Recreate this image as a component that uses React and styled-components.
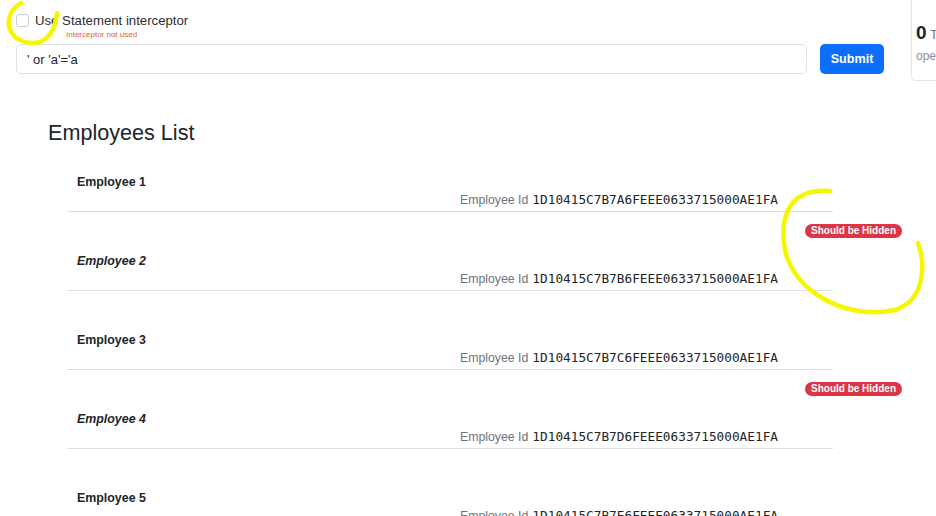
import React from "react";
import styled, { createGlobalStyle } from "styled-components";

const employees = [
  { name: "Employee 1", id: "1D10415C7B7A6FEEE0633715000AE1FA", hidden: false },
  { name: "Employee 2", id: "1D10415C7B7B6FEEE0633715000AE1FA", hidden: true },
  { name: "Employee 3", id: "1D10415C7B7C6FEEE0633715000AE1FA", hidden: false },
  { name: "Employee 4", id: "1D10415C7B7D6FEEE0633715000AE1FA", hidden: true },
  { name: "Employee 5", id: "1D10415C7B7E6FEEE0633715000AE1FA", hidden: false },
];

const App = () => {
  return (
    <Page>
      <GlobalStyle />
      <Top>
        <Form>
          <CheckRow>
            <Check type="checkbox" />
            <CheckLabel>Use Statement interceptor</CheckLabel>
          </CheckRow>
          <Hint>Interceptor not used</Hint>
          <InputRow>
            <QueryInput defaultValue="' or 'a'='a" />
            <SubmitButton>Submit</SubmitButton>
          </InputRow>
        </Form>
        <StatCard>
          <StatTop>Tot</StatTop>
          <StatValue>
            <strong>0</strong> Total
          </StatValue>
          <StatSub>operations</StatSub>
        </StatCard>
      </Top>

      <Section>
        <Title>Employees List</Title>
        <List>
          {employees.map((emp, index) => (
            <Row key={index}>
              <BadgeSlot>{emp.hidden && <Badge>Should be Hidden</Badge>}</BadgeSlot>
              <Name italic={emp.hidden}>{emp.name}</Name>
              <IdLine>
                <IdLabel>Employee Id</IdLabel>
                <IdValue>{emp.id}</IdValue>
              </IdLine>
            </Row>
          ))}
        </List>
      </Section>

      <Marks width="936" height="516" viewBox="0 0 936 516">
        <path d="M21 3 C6 11, 3 33, 22 41 C42 48, 55 36, 57 13" />
        <path d="M830 191 C790 188, 779 215, 785 250 C795 295, 850 320, 895 310 C925 300, 926 265, 918 243" />
      </Marks>
    </Page>
  );
};

const GlobalStyle = createGlobalStyle`
  body {
    margin: 0;
    background: #fff;
    font-family: "Liberation Sans", Arial, sans-serif;
    color: #212529;
    overflow: hidden;
  }
`;

const Page = styled.div`
  position: relative;
  width: 936px;
  height: 516px;
  overflow: hidden;
`;

const Top = styled.div`
  display: flex;
  align-items: flex-start;
`;

const Form = styled.div`
  flex-shrink: 0;
  width: 868px;
  padding: 13px 0 0 16px;
  display: flex;
  flex-direction: column;
`;

const CheckRow = styled.label`
  display: flex;
  align-items: center;
  height: 14px;
`;

const Check = styled.input`
  appearance: none;
  width: 13px;
  height: 13px;
  margin: 0;
  border: 1px solid #c9cdd1;
  border-radius: 3px;
  background: #fff;
`;

const CheckLabel = styled.span`
  margin-left: 6px;
  font-size: 13.2px;
  line-height: 15px;
  color: #2b2f33;
`;

const Hint = styled.div`
  margin: 3px 0 0 50px;
  font-size: 8px;
  line-height: 10px;
  color: #e0603f;
`;

const InputRow = styled.div`
  display: flex;
  gap: 13px;
  margin-top: 4px;
`;

const QueryInput = styled.input`
  flex: 1;
  height: 30px;
  box-sizing: border-box;
  padding: 0 10px;
  border: 1px solid #dee2e6;
  border-radius: 5px;
  font-family: "Liberation Sans", Arial, sans-serif;
  font-size: 13px;
  color: #212529;
  outline: none;
`;

const SubmitButton = styled.button`
  width: 64px;
  height: 30px;
  border: none;
  border-radius: 5px;
  background: #0d6efd;
  color: #fff;
  font-family: "Liberation Sans", Arial, sans-serif;
  font-size: 12.6px;
  font-weight: 700;
`;

const StatCard = styled.div`
  flex-shrink: 0;
  width: 180px;
  height: 91px;
  margin: -10px 0 0 27px;
  box-sizing: border-box;
  padding: 0 0 0 4px;
  border: 1px solid #e3e6e9;
  border-radius: 4px;
`;

const StatTop = styled.div`
  height: 13px;
  font-size: 11px;
  line-height: 11px;
  color: #b0b4b8;
`;

const StatValue = styled.div`
  margin-top: 18px;
  font-size: 13px;
  line-height: 22px;
  color: #6c757d;
  strong {
    font-size: 19px;
    color: #212529;
  }
`;

const StatSub = styled.div`
  margin-top: 2px;
  font-size: 12px;
  line-height: 16px;
  color: #8a9096;
`;

const Section = styled.div`
  padding: 40px 0 0 48px;
`;

const Title = styled.h2`
  margin: 0 0 -12px;
  font-size: 21.6px;
  line-height: 24px;
  font-weight: 400;
  color: #212529;
`;

const List = styled.div`
  margin-left: 19px;
  width: 766px;
`;

const Row = styled.div`
  display: flex;
  flex-direction: column;
  padding: 12px 0 3px;
  border-bottom: 1px solid #dcdfe3;
`;

const BadgeSlot = styled.div`
  display: flex;
  justify-content: flex-end;
  align-items: flex-start;
  height: 14px;
  margin-right: -69px;
`;

const Badge = styled.span`
  display: inline-flex;
  align-items: center;
  height: 14px;
  padding: 0 6px;
  border-radius: 7px;
  background: #dc3545;
  color: #fff;
  font-size: 10px;
  line-height: 14px;
  font-weight: 700;
`;

const Name = styled.div`
  height: 16px;
  margin: 15px 0 0 10px;
  font-size: 12.4px;
  line-height: 16px;
  font-weight: 700;
  font-style: ${(props) => (props.italic ? "italic" : "normal")};
  color: #212529;
`;

const IdLine = styled.div`
  display: flex;
  justify-content: flex-end;
  align-items: center;
  gap: 4px;
  height: 16px;
  margin-top: 2px;
  padding-right: 55px;
  line-height: 16px;
`;

const IdLabel = styled.span`
  font-size: 12.3px;
  color: #6c757d;
`;

const IdValue = styled.span`
  font-family: "DejaVu Sans Mono", monospace;
  font-size: 12.75px;
  color: #212529;
`;

const Marks = styled.svg`
  position: absolute;
  left: 0;
  top: 0;
  pointer-events: none;
  path {
    fill: none;
    stroke: #f6f600;
    stroke-width: 4.5;
    stroke-linecap: round;
  }
`;

export default App;
